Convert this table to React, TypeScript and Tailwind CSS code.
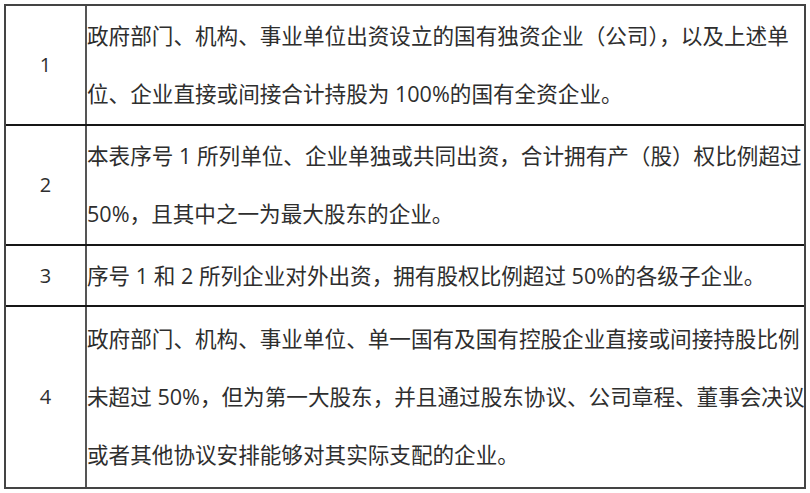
import React from "react";

const rows: { n: string; lines: string[]; h: string }[] = [
  {
    n: "1",
    h: "h-[120px] border-b-2",
    lines: [
      "政府部门、机构、事业单位出资设立的国有独资企业（公司），以及上述单",
      "位、企业直接或间接合计持股为 100%的国有全资企业。",
    ],
  },
  {
    n: "2",
    h: "h-[120px] border-b-2",
    lines: [
      "本表序号 1 所列单位、企业单独或共同出资，合计拥有产（股）权比例超过",
      "50%，且其中之一为最大股东的企业。",
    ],
  },
  {
    n: "3",
    h: "h-[61px] border-b-2",
    lines: ["序号 1 和 2 所列企业对外出资，拥有股权比例超过 50%的各级子企业。"],
  },
  {
    n: "4",
    h: "h-[180px]",
    lines: [
      "政府部门、机构、事业单位、单一国有及国有控股企业直接或间接持股比例",
      "未超过 50%，但为第一大股东，并且通过股东协议、公司章程、董事会决议",
      "或者其他协议安排能够对其实际支配的企业。",
    ],
  },
];

export default function App() {
  return (
    <div
      className="w-[810px] h-[493px] bg-white pl-[4px] pt-[4px] text-[#2e2e2e]"
      style={{ fontFamily: '"Open Sans", "Noto Sans CJK SC", sans-serif' }}
    >
      <div className="w-[802px] border-2 border-[#444]">
        {rows.map((r) => (
          <div key={r.n} className={`flex border-[#161616] ${r.h}`}>
            <div className="w-[81px] shrink-0 border-r-2 border-[#555] flex items-center justify-center text-[20px]">
              {r.n}
            </div>
            <div className="flex-1 flex flex-col justify-center text-[21.6px] leading-[58px] whitespace-nowrap overflow-hidden">
              {r.lines.map((l, i) => (
                <div key={i}>{l}</div>
              ))}
            </div>
          </div>
        ))}
      </div>
    </div>
  );
}
